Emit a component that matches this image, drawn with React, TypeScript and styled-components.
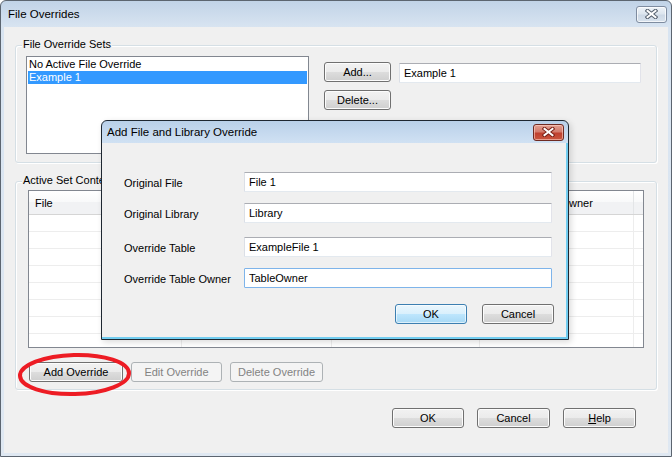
import styled, { createGlobalStyle } from "styled-components"

const GlobalStyle = createGlobalStyle`
  html, body {
    margin: 0;
    padding: 0;
    background: #ffffff;
  }
  * {
    box-sizing: border-box;
  }
`

const Window = styled.div`
  position: relative;
  width: 672px;
  height: 457px;
  border: 1px solid #5c6570;
  border-radius: 6px 6px 0 0;
  background: linear-gradient(#c1d3e7, #d8e4f1 26px, #dfe8f2);
  display: flex;
  flex-direction: column;
  overflow: hidden;
  font-family: "Liberation Sans", Arial, sans-serif;
  font-size: 11px;
  color: #000;
`

const TitleBar = styled.div<{ $height: number; $padLeft: number }>`
  height: ${p => p.$height}px;
  flex: none;
  display: flex;
  align-items: center;
  justify-content: space-between;
  padding: 0 2px 0 ${p => p.$padLeft}px;
`

const TitleText = styled.span<{ $size: number }>`
  font-size: ${p => p.$size}px;
  color: #000;
`

const CaptionButton = styled.div<{ $danger?: boolean }>`
  width: 31px;
  height: 17px;
  margin-right: 2px;
  border-radius: 3px;
  display: flex;
  align-items: center;
  justify-content: center;
  border: 1px solid ${p => (p.$danger ? "#6e2a22" : "#7e8ca0")};
  background: ${p =>
    p.$danger
      ? "linear-gradient(#e3a092, #d37b6c 45%, #c0402f 55%, #c9563f)"
      : "linear-gradient(#eef3f8, #dde6ef 45%, #cdd9e6 55%, #d8e2ed)"};
  box-shadow: inset 0 0 0 1px ${p => (p.$danger ? "rgba(255,210,200,0.6)" : "rgba(255,255,255,0.7)")};
`

const Client = styled.div`
  flex: 1;
  margin: 0 3px 3px 3px;
  background: #f0f0f0;
  padding: 18px 11px 0 11px;
  display: flex;
  flex-direction: column;
`

const GroupBox = styled.div<{ $height: number; $gapTop?: number }>`
  position: relative;
  height: ${p => p.$height}px;
  margin-top: ${p => p.$gapTop ?? 0}px;
  border: 1px solid #d5dfe5;
  border-radius: 3px;
  box-shadow: inset 1px 1px 0 #ffffff, 1px 1px 0 #ffffff;
`

const GroupCaption = styled.span`
  position: absolute;
  left: 6px;
  top: -8px;
  padding: 0 1px;
  line-height: 13px;
  background: #f0f0f0;
`

const SetsRow = styled.div`
  display: flex;
  align-items: flex-start;
  padding: 10px 0 0 10px;
`

const ListBox = styled.div`
  width: 283px;
  height: 98px;
  background: #fff;
  border: 1px solid #828790;
  padding: 1px;
`

const ListItem = styled.div<{ $selected?: boolean }>`
  height: 13px;
  line-height: 13px;
  padding-left: 1px;
  white-space: nowrap;
  background: ${p => (p.$selected ? "#3399ff" : "transparent")};
  color: ${p => (p.$selected ? "#fff" : "#000")};
`

const ButtonColumn = styled.div`
  display: flex;
  flex-direction: column;
  gap: 8px;
  margin: 6px 0 0 15px;
`

const PushButton = styled.button<{ $w: number; $primary?: boolean }>`
  width: ${p => p.$w}px;
  height: 20px;
  padding: 0;
  font-family: inherit;
  font-size: 11px;
  line-height: 18px;
  color: #000;
  border-radius: 3px;
  border: 1px solid ${p => (p.$primary ? "#3c7fb1" : "#707070")};
  background: ${p =>
    p.$primary
      ? "linear-gradient(#eaf6fd, #d9f0fc 50%, #bee6fd 50%, #a7d9f5)"
      : "linear-gradient(#f2f2f2, #ebebeb 50%, #dddddd 50%, #cfcfcf)"};
  box-shadow: inset 0 0 0 1px ${p => (p.$primary ? "rgba(255,255,255,0.6)" : "#fcfcfc")};

  &:disabled {
    border-color: #adb2b5;
    background: #f4f4f4;
    box-shadow: none;
    color: #838383;
  }
`

const TextField = styled.input<{ $w: number; $focused?: boolean; $ml?: number; $mt?: number }>`
  width: ${p => p.$w}px;
  height: 20px;
  margin: ${p => p.$mt ?? 0}px 0 0 ${p => p.$ml ?? 0}px;
  padding: 0 0 0 4px;
  font-family: inherit;
  font-size: 11px;
  color: #000;
  background: #fff;
  border: 1px solid;
  border-color: ${p => (p.$focused ? "#7eb4ea" : "#abadb3 #e2e3ea #e3e9ef #dbdfe6")};
  border-radius: 1px;
  outline: none;
`

const ContentsBody = styled.div`
  padding: 8px 0 0 12px;
  display: flex;
  flex-direction: column;
`

const OverrideTable = styled.div`
  width: 616px;
  height: 158px;
  border: 1px solid #828790;
  background: #fff;
  overflow: hidden;
`

const TableRow = styled.div<{ $header?: boolean }>`
  display: grid;
  grid-template-columns: 153px 150px 148px 154px 1fr;
  height: ${p => (p.$header ? 24 : 17)}px;
  border-bottom: 1px solid ${p => (p.$header ? "#d5d5d5" : "#ededed")};
  background: ${p =>
    p.$header ? "linear-gradient(#ffffff, #f8f9fa 50%, #f1f2f4 50%, #f1f2f4)" : "#fff"};
`

const TableCell = styled.div<{ $header?: boolean }>`
  border-right: 1px solid ${p => (p.$header ? "#e3e5e7" : "#ededed")};
  padding-left: 6px;
  display: flex;
  align-items: center;
  white-space: nowrap;
  overflow: hidden;
  &:last-child {
    border-right: none;
  }
`

const ActionRow = styled.div`
  display: flex;
  gap: 8px;
  margin: 14px 0 0 1px;
`

const FooterRow = styled.div`
  display: flex;
  justify-content: flex-end;
  gap: 13px;
  margin: 18px 21px 0 0;
`

const Dialog = styled.div`
  position: absolute;
  left: 100px;
  top: 119px;
  width: 468px;
  height: 220px;
  border: 1px solid #1e2731;
  border-radius: 6px 6px 0 0;
  background: linear-gradient(#b9d0e9, #d0e1f3 22px, #72cdf0 22px);
  display: flex;
  flex-direction: column;
  box-shadow: 2px 2px 6px rgba(0, 0, 0, 0.15);
`

const DialogBody = styled.div`
  flex: 1;
  margin: 0 2px 2px 0;
  background: #f0f0f0;
  padding: 29px 0 0 22px;
  display: flex;
  flex-direction: column;
`

const FieldRow = styled.div<{ $mt: number }>`
  display: grid;
  grid-template-columns: 120px 308px;
  align-items: center;
  margin-top: ${p => p.$mt}px;
`

const FieldLabel = styled.span`
  padding-top: 2px;
`

const DialogButtons = styled.div`
  display: flex;
  justify-content: flex-end;
  gap: 15px;
  margin: 16px 12px 0 0;
`

const Annotation = styled.svg`
  position: absolute;
  left: 14px;
  top: 349px;
  pointer-events: none;
`

const CloseGlyph = ({ outline }: { outline: string }) => (
  <svg width="13" height="10" viewBox="0 0 13 10">
    <path d="M2.5 1.8 L10.5 8.2 M10.5 1.8 L2.5 8.2" stroke={outline} strokeWidth="4" strokeLinecap="square" fill="none" />
    <path d="M2.5 1.8 L10.5 8.2 M10.5 1.8 L2.5 8.2" stroke="#ffffff" strokeWidth="2" strokeLinecap="square" fill="none" />
  </svg>
)

const headers = ["File", "Library", "Override Table", "Override Table Owner", ""]

export default function App() {
  return (
    <>
      <GlobalStyle />
      <Window>
        <TitleBar $height={26} $padLeft={7}>
          <TitleText $size={11.5}>File Overrides</TitleText>
          <CaptionButton>
            <CloseGlyph outline="#55606e" />
          </CaptionButton>
        </TitleBar>

        <Client>
          <GroupBox $height={118}>
            <GroupCaption>File Override Sets</GroupCaption>
            <SetsRow>
              <ListBox>
                <ListItem>No Active File Override</ListItem>
                <ListItem $selected>Example 1</ListItem>
              </ListBox>
              <ButtonColumn>
                <PushButton $w={67}>Add...</PushButton>
                <PushButton $w={67}>Delete...</PushButton>
              </ButtonColumn>
              <TextField $w={242} $ml={8} $mt={7} readOnly value="Example 1" />
            </SetsRow>
          </GroupBox>

          <GroupBox $height={209} $gapTop={18}>
            <GroupCaption>Active Set Contents</GroupCaption>
            <ContentsBody>
              <OverrideTable>
                <TableRow $header>
                  {headers.map((h, i) => (
                    <TableCell $header key={i}>{h}</TableCell>
                  ))}
                </TableRow>
                {Array.from({ length: 8 }).map((_, r) => (
                  <TableRow key={r}>
                    {headers.map((_, i) => (
                      <TableCell key={i} />
                    ))}
                  </TableRow>
                ))}
              </OverrideTable>
              <ActionRow>
                <PushButton $w={94}>Add Override</PushButton>
                <PushButton $w={91} disabled>Edit Override</PushButton>
                <PushButton $w={93} disabled>Delete Override</PushButton>
              </ActionRow>
            </ContentsBody>
          </GroupBox>

          <FooterRow>
            <PushButton $w={72}>OK</PushButton>
            <PushButton $w={73}>Cancel</PushButton>
            <PushButton $w={73}>
              <u>H</u>elp
            </PushButton>
          </FooterRow>
        </Client>

        <Dialog>
          <TitleBar $height={22} $padLeft={5}>
            <TitleText $size={11.5}>Add File and Library Override</TitleText>
            <CaptionButton $danger>
              <CloseGlyph outline="#7a2218" />
            </CaptionButton>
          </TitleBar>
          <DialogBody>
            <FieldRow $mt={0}>
              <FieldLabel>Original File</FieldLabel>
              <TextField $w={308} readOnly value="File 1" />
            </FieldRow>
            <FieldRow $mt={11}>
              <FieldLabel>Original Library</FieldLabel>
              <TextField $w={308} readOnly value="Library" />
            </FieldRow>
            <FieldRow $mt={14}>
              <FieldLabel>Override Table</FieldLabel>
              <TextField $w={308} readOnly value="ExampleFile 1" />
            </FieldRow>
            <FieldRow $mt={11}>
              <FieldLabel>Override Table Owner</FieldLabel>
              <TextField $w={308} $focused readOnly value="TableOwner" />
            </FieldRow>
            <DialogButtons>
              <PushButton $w={72} $primary>OK</PushButton>
              <PushButton $w={72}>Cancel</PushButton>
            </DialogButtons>
          </DialogBody>
        </Dialog>

        <Annotation width="120" height="50" viewBox="0 0 120 50">
          <ellipse cx="59.5" cy="24.5" rx="54.5" ry="19.5" fill="none" stroke="#ed1c24" strokeWidth="4" transform="rotate(-1.5 59.5 24.5)" />
        </Annotation>
      </Window>
    </>
  )
}
